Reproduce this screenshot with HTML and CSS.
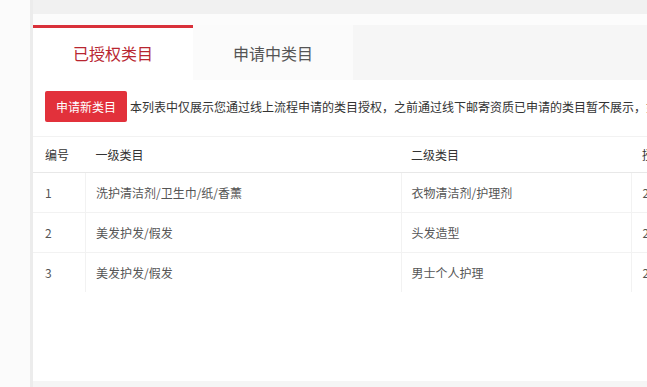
FILE: index.html
```html
<!DOCTYPE html>
<html lang="zh">
<head>
<meta charset="utf-8">
<link rel="stylesheet" href="styles.css">
</head>
<body>
<div class="page">
  <div class="gutter"></div>
  <div class="main">
    <div class="topbar"></div>
    <div class="panel">
      <div class="tabs">
        <div class="tab active">已授权类目</div>
        <div class="tab">申请中类目</div>
        <div class="tab-rest"></div>
      </div>
      <div class="toolbar">
        <button class="btn">申请新类目</button>
        <span class="notice">本列表中仅展示您通过线上流程申请的类目授权，之前通过线下邮寄资质已申请的类目暂不展示，如需查看请联系</span>
      </div>
      <table class="grid">
        <thead>
          <tr><th class="c-no">编号</th><th class="c-1">一级类目</th><th class="c-2">二级类目</th><th class="c-3">授权时间</th></tr>
        </thead>
        <tbody>
          <tr><td class="c-no">1</td><td>洗护清洁剂/卫生巾/纸/香薰</td><td>衣物清洁剂/护理剂</td><td>2019-05-20</td></tr>
          <tr><td class="c-no">2</td><td>美发护发/假发</td><td>头发造型</td><td>2019-05-20</td></tr>
          <tr><td class="c-no">3</td><td>美发护发/假发</td><td>男士个人护理</td><td>2019-05-20</td></tr>
        </tbody>
      </table>
    </div>
  </div>
</div>
</body>
</html>
```

FILE: styles.css
```css
html, body {
  margin: 0;
  padding: 0;
  background: #fcfcfc;
  font-family: "Microsoft YaHei", "Noto Sans CJK SC", "Noto Sans", sans-serif;
  overflow: hidden;
}
.page {
  display: flex;
  width: 647px;
  height: 387px;
}
.gutter {
  width: 30px;
  flex: none;
  background: #fbfbfb;
  border-right: 3px solid #ececec;
}
.main {
  flex: 1;
  display: flex;
  flex-direction: column;
  min-width: 0;
  overflow: hidden;
}
.topbar {
  height: 14px;
  background: #f1f1f1;
  flex: none;
}
.panel {
  margin-top: 11px;
  flex: 1;
  background: #fff;
  border-bottom: 6px solid #f5f5f5;
  overflow: hidden;
}
.tabs {
  display: flex;
  height: 55px;
  background: #f6f6f6;
}
.tab {
  width: 160px;
  flex: none;
  display: flex;
  align-items: center;
  justify-content: center;
  font-size: 16px;
  color: #555;
  background: #fbfbfb;
  box-sizing: border-box;
  border-top: 3px solid transparent;
  padding-bottom: 2px;
}
.tab.active {
  background: #fff;
  color: #b82630;
  border-top-color: #d9313a;
}
.tab-rest {
  flex: 1;
}
.toolbar {
  display: flex;
  align-items: center;
  padding: 11px 0 0 12px;
  white-space: nowrap;
}
.btn {
  flex: none;
  width: 82px;
  height: 31px;
  border: none;
  border-radius: 2px;
  background: #e2313b;
  color: #fff;
  font-family: inherit;
  font-size: 12px;
  padding: 0;
  margin-right: 3px;
}
.notice {
  font-size: 12px;
  color: #333;
}
.grid {
  margin-top: 14px;
  border-collapse: collapse;
  table-layout: fixed;
  width: 720px;
  font-size: 12px;
  white-space: nowrap;
}
.grid th {
  height: 35px;
  text-align: left;
  font-weight: normal;
  color: #333;
  padding: 0 0 0 10px;
  border-top: 1px solid #f2f2f2;
  border-bottom: 1px solid #e8e8e8;
}
.grid td {
  height: 39px;
  padding: 0 0 0 10px;
  color: #555;
  border-bottom: 1px solid #f2f2f2;
  border-left: 1px solid #f2f2f2;
}
.grid .c-no {
  padding-left: 12px;
}
.grid td.c-no {
  border-left: none;
}
.grid tbody tr:last-child td {
  border-bottom: none;
}
.c-no { width: 40px; }
.c-1 { width: 303px; }
.c-2 { width: 219px; }
.c-3 { width: 110px; }
```
